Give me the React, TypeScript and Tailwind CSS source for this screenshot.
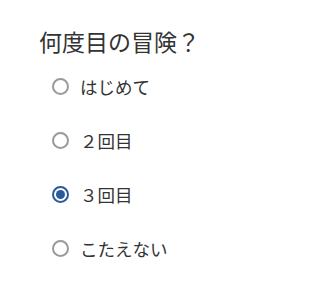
import React, { useState } from "react";

const options = ["はじめて", "２回目", "３回目", "こたえない"];

export default function App() {
  const [sel, setSel] = useState(2);
  return (
    <div
      className="w-[246px] h-[289px] bg-white text-[#333]"
      style={{ fontFamily: '"Noto Sans CJK JP", sans-serif' }}
    >
      <div className="pt-[25px] pl-[39px] text-[23px] leading-[32px] text-[#333]">
        何度目の冒険？
      </div>
      <div className="flex flex-col pl-[52px] pt-[21px] gap-[37px]">
        {options.map((o, i) => (
          <label key={i} className="flex items-center gap-[11px] h-[17px] cursor-pointer" onClick={() => setSel(i)}>
            {sel === i ? (
              <span className="w-[17px] h-[17px] shrink-0 rounded-full border-2 border-[#2a5a9a] flex items-center justify-center">
                <span className="w-[9px] h-[9px] rounded-full bg-[#2a5a9a]" />
              </span>
            ) : (
              <span className="w-[17px] h-[17px] shrink-0 rounded-full border-2 border-[#9a9a9a]" />
            )}
            <span className="text-[17.5px] leading-[20px]">{o}</span>
          </label>
        ))}
      </div>
    </div>
  );
}
